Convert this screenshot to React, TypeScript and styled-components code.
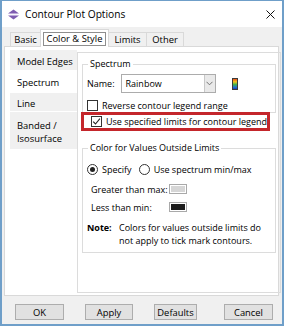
import React from 'react';
import styled, { createGlobalStyle, css } from 'styled-components';

const GlobalStyle = createGlobalStyle`
  html, body { margin: 0; padding: 0; background: #ffffff; }
  body {
    font-family: 'Open Sans', 'Noto Sans', sans-serif;
    font-size: 9px;
    color: #000;
  }
  * { box-sizing: border-box; }
`;

const Window = styled.div`
  width: 284px;
  height: 326px;
  display: flex;
  flex-direction: column;
  border: 2px solid #6f9fc9;
  border-top-width: 1px;
  background: #f0f0f0;
  overflow: hidden;
`;

const TitleBar = styled.div`
  height: 26px;
  flex: none;
  display: flex;
  align-items: center;
  background: #fff;
  padding: 0 7px 0 5px;
`;

const TitleText = styled.span`
  margin-left: 5px;
  font-size: 10.2px;
`;

const CloseBox = styled.span`
  margin-left: auto;
  display: flex;
`;

const Body = styled.div`
  flex: 1;
  display: flex;
  flex-direction: column;
  padding: 2px 3px 4px 2px;
`;

const TabStrip = styled.div`
  height: 17px;
  display: flex;
  align-items: flex-end;
  padding-left: 6px;
  position: relative;
  z-index: 1;
`;

const Tab = styled.div<{ $w: number; $active?: boolean }>`
  width: ${p => p.$w}px;
  height: 14px;
  display: flex;
  align-items: center;
  justify-content: center;
  white-space: nowrap;
  font-size: 9.4px;
  background: #f0f0f0;
  border: 1px solid #d9d9d9;
  border-bottom: none;
  margin-right: -1px;
  ${p => p.$active && css`
    height: 18px;
    margin-bottom: -1px;
    background: #fff;
    padding: 0 2px;
  `}
`;

const FocusRect = styled.span`
  display: flex;
  align-items: center;
  justify-content: center;
  width: 100%;
  height: 14px;
  border: 1px solid #8e8e8e;
`;

const Pane = styled.div`
  height: 250px;
  display: flex;
  background: #fff;
  border: 1px solid #d9d9d9;
  padding: 3px 4px 2px 5px;
`;

const SideTabs = styled.div`
  width: 67px;
  flex: none;
  display: flex;
  flex-direction: column;
  gap: 1px;
`;

const SideTab = styled.div<{ $h: number; $active?: boolean }>`
  height: ${p => p.$h}px;
  display: flex;
  align-items: center;
  padding: 2px 0 0 7px;
  line-height: 13px;
  font-size: 9.4px;
  white-space: nowrap;
  background: ${p => (p.$active ? '#fff' : '#f0f0f0')};
`;

const Content = styled.div`
  flex: 1;
  margin-top: 2px;
  border: 1px solid #dcdcdc;
  padding: 0 4px 0 4px;
  display: flex;
  flex-direction: column;
`;

const Group = styled.fieldset<{ $mt: number; $pb: number }>`
  margin: ${p => p.$mt}px 0 0 0;
  padding: 0 0 ${p => p.$pb}px 0;
  border: 1px solid #dcdcdc;
  min-width: 0;
`;

const Legend = styled.legend`
  margin-left: 5px;
  padding: 0 2px;
  line-height: 14px;
  white-space: nowrap;
`;

const Row = styled.div<{ $mt: number; $pl?: number; $h?: number }>`
  display: flex;
  align-items: center;
  white-space: nowrap;
  height: ${p => p.$h ?? 12}px;
  margin-top: ${p => p.$mt}px;
  padding-left: ${p => p.$pl ?? 4}px;
`;

const Select = styled.div`
  width: 95px;
  height: 19px;
  margin-left: 6px;
  display: flex;
  border: 1px solid #acacac;
  background: #fff;
`;

const SelectText = styled.span`
  flex: 1;
  display: flex;
  align-items: center;
  padding-left: 4px;
`;

const SelectArrow = styled.span`
  width: 11px;
  display: flex;
  align-items: center;
  justify-content: center;
  background: #e9e9e9;
  border-left: 1px solid #c8c8c8;
`;

const Box = styled.span<{ $round?: boolean; $ml?: number }>`
  width: 11px;
  height: 11px;
  flex: none;
  display: flex;
  align-items: center;
  justify-content: center;
  border: 1px solid #333;
  background: #fff;
  border-radius: ${p => (p.$round ? '50%' : '0')};
  margin: 0 4px 0 ${p => p.$ml ?? 0}px;
`;

const Dot = styled.span`
  width: 5px;
  height: 5px;
  border-radius: 50%;
  background: #222;
`;

const Highlight = styled.div`
  height: 19px;
  margin: -1px 6px 0 -1px;
  border: 3px solid #c4262b;
  display: flex;
  align-items: center;
  white-space: nowrap;
  padding-left: 7px;
`;

const Label = styled.span<{ $w?: number }>`
  width: ${p => (p.$w ? `${p.$w}px` : 'auto')};
  flex: none;
  white-space: nowrap;
`;

const Swatch = styled.span<{ $color: string }>`
  width: 18px;
  height: 10px;
  border: 1px solid #a9a9a9;
  padding: 1px;
  display: flex;
  background: #fff;
  &::after {
    content: '';
    flex: 1;
    background: ${p => p.$color};
  }
`;

const Note = styled.div`
  display: grid;
  grid-template-columns: 32px 1fr;
  margin-top: 8px;
  padding-left: 4px;
  line-height: 13px;
  white-space: nowrap;
`;

const NoteHead = styled.span`
  font-weight: 700;
`;

const ButtonRow = styled.div`
  display: flex;
  margin-top: 8px;
  height: 16px;
`;

const Button = styled.div<{ $w: number; $ml: number }>`
  width: ${p => p.$w}px;
  margin-left: ${p => p.$ml}px;
  height: 16px;
  display: flex;
  align-items: center;
  justify-content: center;
  font-size: 9.4px;
  background: #e1e1e1;
  border: 1px solid #adadad;
`;

const AppIcon = () => (
  <svg width="13" height="11" viewBox="0 0 13 11">
    <path d="M1 4.6 L6.5 0.6 L12 4.6 Z" fill="#7e5bb0" />
    <path d="M1 6.4 L12 6.4 L6.5 10.4 Z" fill="#7e5bb0" />
    <path d="M3 4.6 L10 4.6 M3 6.4 L10 6.4" stroke="#b9a5d8" strokeWidth="0.6" />
  </svg>
);

const CloseIcon = () => (
  <svg width="9" height="9" viewBox="0 0 9 9">
    <path d="M0.5 0.5 L8.5 8.5 M8.5 0.5 L0.5 8.5" stroke="#111" strokeWidth="1" />
  </svg>
);

const Chevron = () => (
  <svg width="7" height="5" viewBox="0 0 7 5">
    <path d="M0.5 0.8 L3.5 3.8 L6.5 0.8" fill="none" stroke="#666" strokeWidth="0.9" />
  </svg>
);

const Check = () => (
  <svg width="9" height="9" viewBox="0 0 9 9">
    <path d="M1.2 4.6 L3.5 7 L7.9 1.6" fill="none" stroke="#222" strokeWidth="1.1" />
  </svg>
);

const RainbowIcon = () => (
  <svg width="6" height="12" viewBox="0 0 6 12" style={{ marginLeft: 16 }}>
    <defs>
      <linearGradient id="rb" x1="0" y1="0" x2="0" y2="1">
        <stop offset="0" stopColor="#e83a1c" />
        <stop offset="0.3" stopColor="#f4c21a" />
        <stop offset="0.55" stopColor="#3fb34a" />
        <stop offset="0.8" stopColor="#1f6fd6" />
        <stop offset="1" stopColor="#1a2fa8" />
      </linearGradient>
    </defs>
    <rect x="0.5" y="0.5" width="5" height="11" fill="url(#rb)" stroke="#3b3b3b" strokeWidth="1" />
  </svg>
);

export default function App() {
  return (
    <>
      <GlobalStyle />
      <Window>
        <TitleBar>
          <AppIcon />
          <TitleText>Contour Plot Options</TitleText>
          <CloseBox><CloseIcon /></CloseBox>
        </TitleBar>
        <Body>
          <TabStrip>
            <Tab $w={31}>Basic</Tab>
            <Tab $w={69} $active><FocusRect>Color &amp; Style</FocusRect></Tab>
            <Tab $w={39}>Limits</Tab>
            <Tab $w={38}>Other</Tab>
          </TabStrip>
          <Pane>
            <SideTabs>
              <SideTab $h={20}>Model Edges</SideTab>
              <SideTab $h={21} $active>Spectrum</SideTab>
              <SideTab $h={18}>Line</SideTab>
              <SideTab $h={37}>Banded /<br />Isosurface</SideTab>
            </SideTabs>
            <Content>
              <Group $mt={4} $pb={1}>
                <Legend>Spectrum</Legend>
                <Row $mt={3} $h={19}>
                  <span>Name:</span>
                  <Select>
                    <SelectText>Rainbow</SelectText>
                    <SelectArrow><Chevron /></SelectArrow>
                  </Select>
                  <RainbowIcon />
                </Row>
                <Row $mt={6}>
                  <Box />
                  <span>Reverse contour legend range</span>
                </Row>
              </Group>
              <Highlight>
                <Box><Check /></Box>
                <span>Use specified limits for contour legend</span>
              </Highlight>
              <Group $mt={10} $pb={5}>
                <Legend>Color for Values Outside Limits</Legend>
                <Row $mt={8}>
                  <Box $round><Dot /></Box>
                  <Label>Specify</Label>
                  <Box $round $ml={7} />
                  <Label>Use spectrum min/max</Label>
                </Row>
                <Row $mt={8} $pl={8}>
                  <Label $w={78}>Greater than max:</Label>
                  <Swatch $color="#d6d6d6" />
                </Row>
                <Row $mt={6} $pl={8}>
                  <Label $w={78}>Less than min:</Label>
                  <Swatch $color="#1c1c1c" />
                </Row>
                <Note>
                  <NoteHead>Note:</NoteHead>
                  <span>Colors for values outside limits do<br />not apply to tick mark contours.</span>
                </Note>
              </Group>
            </Content>
          </Pane>
          <ButtonRow>
            <Button $w={49} $ml={11}>OK</Button>
            <Button $w={48} $ml={21}>Apply</Button>
            <Button $w={43} $ml={21}>Defaults</Button>
            <Button $w={49} $ml={27}>Cancel</Button>
          </ButtonRow>
        </Body>
      </Window>
    </>
  );
}
